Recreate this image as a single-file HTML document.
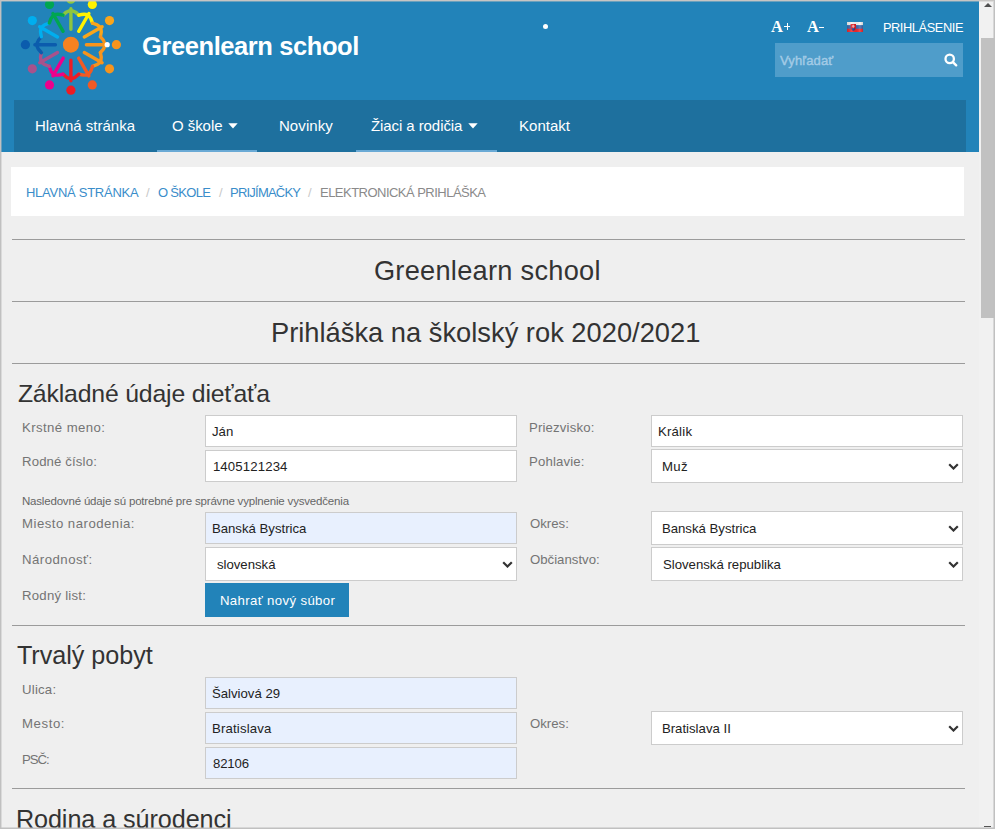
<!DOCTYPE html>
<html><head><meta charset="utf-8">
<style>
*{margin:0;padding:0;box-sizing:border-box}
html,body{width:995px;height:829px;overflow:hidden;background:#efefef}
body{position:relative;font-family:'Liberation Sans',sans-serif}
.b{position:absolute}
.t{position:absolute;white-space:nowrap;line-height:1}
.bm{display:inline-block;width:0;height:0;vertical-align:baseline}
</style></head><body>
<div class="b" style="left:0px;top:0px;width:995px;height:829px;background:#efefef;"></div>
<div class="b" style="left:1px;top:1px;width:978px;height:151px;background:#2283b9;"></div>
<svg width="140" height="100" style="position:absolute;left:0;top:0"><g fill="none" stroke-width="3.4" stroke-linecap="round" stroke-linejoin="round"><path stroke="#8dc63f" d="M70.9 29.2L70.9 8.7M63.0 15.2Q66.2 11.5 70.9 10.2Q75.6 11.5 78.8 15.2"/><circle cx="70.9" cy="-0.8" r="4.6" fill="#8dc63f" stroke="none"/><path stroke="#fff200" d="M78.7 31.3L88.9 13.5M78.8 15.2Q83.4 13.6 88.2 14.8Q91.5 18.3 92.5 23.1"/><circle cx="92.3" cy="4.5" r="4.6" fill="#fff200" stroke="none"/><path stroke="#f9a51b" d="M84.3 37.0L102.1 26.7M92.5 23.1Q97.3 24.1 100.8 27.5Q102.0 32.2 100.4 36.8"/><circle cx="109.5" cy="20.6" r="4.6" fill="#f9a51b" stroke="none"/><path stroke="#f7941d" d="M86.4 44.7L106.9 44.7M100.4 36.8Q104.1 40.0 105.4 44.7Q104.1 49.4 100.4 52.6"/><circle cx="116.4" cy="44.7" r="4.6" fill="#f7941d" stroke="none"/><path stroke="#f7941d" d="M84.3 52.5L102.1 62.7M100.4 52.6Q102.0 57.2 100.8 62.0Q97.3 65.3 92.5 66.3"/><circle cx="109.5" cy="68.8" r="4.6" fill="#f7941d" stroke="none"/><path stroke="#f15a24" d="M78.7 58.1L88.9 75.9M92.5 66.3Q91.5 71.1 88.2 74.6Q83.4 75.8 78.8 74.2"/><circle cx="92.3" cy="84.9" r="4.6" fill="#f15a24" stroke="none"/><path stroke="#ed1c24" d="M70.9 60.2L70.9 80.7M78.8 74.2Q75.6 77.9 70.9 79.2Q66.2 77.9 63.0 74.2"/><circle cx="70.9" cy="90.2" r="4.6" fill="#ed1c24" stroke="none"/><path stroke="#ec008c" d="M63.2 58.1L52.9 75.9M63.0 74.2Q58.4 75.8 53.7 74.6Q50.3 71.1 49.3 66.3"/><circle cx="49.5" cy="84.9" r="4.6" fill="#ec008c" stroke="none"/><path stroke="#a8528c" d="M57.5 52.5L39.7 62.7M49.3 66.3Q44.5 65.3 41.0 62.0Q39.8 57.2 41.4 52.6"/><circle cx="32.3" cy="68.8" r="4.6" fill="#a8528c" stroke="none"/><path stroke="#0b5cad" d="M55.4 44.7L34.9 44.7M41.4 52.6Q37.7 49.4 36.4 44.7Q37.7 40.0 41.4 36.8"/><circle cx="25.4" cy="44.7" r="4.6" fill="#0b5cad" stroke="none"/><path stroke="#00aeef" d="M57.5 37.0L39.7 26.7M41.4 36.8Q39.8 32.2 41.0 27.4Q44.5 24.1 49.3 23.1"/><circle cx="32.3" cy="20.6" r="4.6" fill="#00aeef" stroke="none"/><path stroke="#00a651" d="M63.1 31.3L52.9 13.5M49.3 23.1Q50.3 18.3 53.6 14.8Q58.4 13.6 63.0 15.2"/><circle cx="49.5" cy="4.5" r="4.6" fill="#00a651" stroke="none"/></g><circle cx="70.9" cy="44.7" r="8" fill="#f58220"/><circle cx="107.2" cy="44.7" r="2.6" fill="#fff"/></svg>
<div class="b" style="left:542.9px;top:23.9px;width:5.2px;height:5.2px;background:#fff;border-radius:50%"></div>
<svg class="b" style="left:847px;top:22px" width="16" height="10" viewBox="0 0 16 10"><defs><linearGradient id="fg" x1="0" y1="0" x2="1" y2="0"><stop offset="0" stop-color="#000" stop-opacity=".12"/><stop offset=".3" stop-color="#fff" stop-opacity=".15"/><stop offset=".55" stop-color="#000" stop-opacity=".05"/><stop offset=".8" stop-color="#fff" stop-opacity=".15"/><stop offset="1" stop-color="#000" stop-opacity=".15"/></linearGradient></defs><rect width="16" height="3.3" fill="#f6f6f6"/><rect y="3.3" width="16" height="3.4" fill="#3e68b0"/><rect y="6.7" width="16" height="3.3" fill="#f0282c"/><path d="M3.6 1.9h5.4v3.9q0 2.4-2.7 3.4q-2.7-1-2.7-3.4z" fill="#e0191f"/><path d="M4.3 6.6q2-1.2 4 0q-0.5 1.9-2 2.3q-1.5-.4-2-2.3z" fill="#1d3f95"/><path d="M6.3 2.6v3.6M5.2 3.6h2.2M4.9 4.6h2.8" stroke="#f4c6c6" stroke-width=".7"/><rect width="16" height="10" fill="url(#fg)"/></svg>
<div class="b" style="left:775px;top:43px;width:188px;height:34px;background:#4f9dca;"></div>
<div class="b" style="left:783.8px;top:25.8px;width:6.6px;height:1.1px;background:#fff;"></div>
<div class="b" style="left:786.5px;top:22.8px;width:1.1px;height:7px;background:#fff;"></div>
<div class="b" style="left:819.4px;top:26.9px;width:4.2px;height:1.0px;background:#fff;"></div>
<svg class="b" style="left:944px;top:53px" width="14" height="14" viewBox="0 0 14 14"><circle cx="5.7" cy="5.9" r="4.2" stroke="#fff" stroke-width="2.3" fill="none"/><path d="M8.9 9.1L12.2 12.3" stroke="#fff" stroke-width="2.4" stroke-linecap="round"/></svg>
<div class="b" style="left:14px;top:100px;width:952px;height:52px;background:#1e709e;"></div>
<div class="b" style="left:157px;top:150px;width:100px;height:2px;background:#6aaad5;"></div>
<div class="b" style="left:356px;top:150px;width:141px;height:2px;background:#6aaad5;"></div>
<svg class="b" style="left:228px;top:123px" width="10" height="6" viewBox="0 0 10 6"><path d="M0.3 0.3H9.7L5 5.6Z" fill="#fff"/></svg>
<svg class="b" style="left:468.4px;top:123px" width="10" height="6" viewBox="0 0 10 6"><path d="M0.3 0.3H9.7L5 5.6Z" fill="#fff"/></svg>
<div class="b" style="left:11px;top:167px;width:953px;height:49px;background:#fff;"></div>
<div class="b" style="left:12px;top:239px;width:953px;height:1px;background:#9b9b9b;"></div>
<div class="b" style="left:12px;top:301px;width:953px;height:1px;background:#9b9b9b;"></div>
<div class="b" style="left:12px;top:363px;width:953px;height:1px;background:#9b9b9b;"></div>
<div class="b" style="left:12px;top:625px;width:953px;height:1px;background:#9b9b9b;"></div>
<div class="b" style="left:12px;top:788px;width:953px;height:1px;background:#9b9b9b;"></div>
<div class="b" style="left:205px;top:415px;width:312px;height:32px;background:#fff;border:1px solid #cccccc"></div>
<div class="b" style="left:651px;top:415px;width:312px;height:32px;background:#fff;border:1px solid #cccccc"></div>
<div class="b" style="left:205px;top:450px;width:312px;height:32px;background:#fff;border:1px solid #cccccc"></div>
<div class="b" style="left:651px;top:449px;width:312px;height:34px;background:#fff;border:1px solid #cccccc"></div><svg class="b" style="left:948px;top:463px" width="11" height="7" viewBox="0 0 11 7"><path d="M1.2 1.2L5.5 5.5L9.8 1.2" stroke="#333" stroke-width="2.2" fill="none"/></svg>
<div class="b" style="left:205px;top:512px;width:312px;height:32px;background:#e8f0fe;border:1px solid #cccccc"></div>
<div class="b" style="left:651px;top:511px;width:312px;height:34px;background:#fff;border:1px solid #cccccc"></div><svg class="b" style="left:948px;top:525px" width="11" height="7" viewBox="0 0 11 7"><path d="M1.2 1.2L5.5 5.5L9.8 1.2" stroke="#333" stroke-width="2.2" fill="none"/></svg>
<div class="b" style="left:205px;top:547px;width:312px;height:34px;background:#fff;border:1px solid #cccccc"></div><svg class="b" style="left:502px;top:561px" width="11" height="7" viewBox="0 0 11 7"><path d="M1.2 1.2L5.5 5.5L9.8 1.2" stroke="#333" stroke-width="2.2" fill="none"/></svg>
<div class="b" style="left:651px;top:547px;width:312px;height:34px;background:#fff;border:1px solid #cccccc"></div><svg class="b" style="left:948px;top:561px" width="11" height="7" viewBox="0 0 11 7"><path d="M1.2 1.2L5.5 5.5L9.8 1.2" stroke="#333" stroke-width="2.2" fill="none"/></svg>
<div class="b" style="left:205px;top:583px;width:144px;height:34px;background:#2283b9;"></div>
<div class="b" style="left:205px;top:677px;width:312px;height:32px;background:#e8f0fe;border:1px solid #cccccc"></div>
<div class="b" style="left:205px;top:712px;width:312px;height:32px;background:#e8f0fe;border:1px solid #cccccc"></div>
<div class="b" style="left:651px;top:711px;width:312px;height:34px;background:#fff;border:1px solid #cccccc"></div><svg class="b" style="left:948px;top:725px" width="11" height="7" viewBox="0 0 11 7"><path d="M1.2 1.2L5.5 5.5L9.8 1.2" stroke="#333" stroke-width="2.2" fill="none"/></svg>
<div class="b" style="left:205px;top:747px;width:312px;height:32px;background:#e8f0fe;border:1px solid #cccccc"></div>
<div class="b" style="left:979px;top:1px;width:14px;height:826px;background:#f1f1f1;"></div>
<div class="b" style="left:981px;top:38px;width:13px;height:280px;background:#c1c1c1;"></div>
<svg class="b" style="left:982.5px;top:2px" width="10" height="6" viewBox="0 0 10 6"><path d="M1 5H9L5 1Z" fill="#505050"/></svg>
<div class="b" style="left:984px;top:826px;width:7px;height:1px;background:#555;"></div>
<div id="title" class="t" style="left:142.00px;top:34.00px;font-family:'Liberation Sans',sans-serif;font-weight:bold;font-size:25.5px;color:#fff;letter-spacing:-0.411px;">Greenlearn school<i class="bm"></i></div>
<div id="aplus" class="t" style="left:770.92px;top:19.00px;font-family:'Liberation Serif',serif;font-weight:bold;font-size:16.5px;color:#fff;letter-spacing:0.000px;">A<i class="bm"></i></div>
<div id="aminus" class="t" style="left:806.92px;top:19.00px;font-family:'Liberation Serif',serif;font-weight:bold;font-size:16.5px;color:#fff;letter-spacing:0.000px;">A<i class="bm"></i></div>
<div id="prih" class="t" style="left:882.92px;top:21.60px;font-family:'Liberation Sans',sans-serif;font-weight:normal;font-size:12.8px;color:#fff;letter-spacing:-0.410px;">PRIHLÁSENIE<i class="bm"></i></div>
<div id="vyh" class="t" style="left:779.95px;top:54.00px;font-family:'Liberation Sans',sans-serif;font-weight:normal;font-size:13px;color:#a3cbe6;letter-spacing:0.143px;-webkit-text-stroke:0.4px #a3cbe6">Vyhľadať<i class="bm"></i></div>
<div id="nav0" class="t" style="left:35.00px;top:117.70px;font-family:'Liberation Sans',sans-serif;font-weight:normal;font-size:15px;color:#fff;letter-spacing:-0.000px;">Hlavná stránka<i class="bm"></i></div>
<div id="nav1" class="t" style="left:171.92px;top:117.70px;font-family:'Liberation Sans',sans-serif;font-weight:normal;font-size:15px;color:#fff;letter-spacing:-0.033px;">O škole<i class="bm"></i></div>
<div id="nav2" class="t" style="left:278.96px;top:117.70px;font-family:'Liberation Sans',sans-serif;font-weight:normal;font-size:15px;color:#fff;letter-spacing:0.084px;">Novinky<i class="bm"></i></div>
<div id="nav3" class="t" style="left:370.92px;top:117.70px;font-family:'Liberation Sans',sans-serif;font-weight:normal;font-size:15px;color:#fff;letter-spacing:-0.072px;">Žiaci a rodičia<i class="bm"></i></div>
<div id="nav4" class="t" style="left:519.00px;top:117.70px;font-family:'Liberation Sans',sans-serif;font-weight:normal;font-size:15px;color:#fff;letter-spacing:0.016px;">Kontakt<i class="bm"></i></div>
<div id="bc0" class="t" style="left:26.00px;top:186.00px;font-family:'Liberation Sans',sans-serif;font-weight:normal;font-size:13px;color:#3a8dca;letter-spacing:-0.269px;">HLAVNÁ STRÁNKA<i class="bm"></i></div>
<div id="bc1" class="t" style="left:145.89px;top:186.00px;font-family:'Liberation Sans',sans-serif;font-weight:normal;font-size:13px;color:#c8c8c8;letter-spacing:0.000px;">/<i class="bm"></i></div>
<div id="bc2" class="t" style="left:157.89px;top:186.00px;font-family:'Liberation Sans',sans-serif;font-weight:normal;font-size:13px;color:#3a8dca;letter-spacing:-0.683px;">O ŠKOLE<i class="bm"></i></div>
<div id="bc3" class="t" style="left:218.92px;top:186.00px;font-family:'Liberation Sans',sans-serif;font-weight:normal;font-size:13px;color:#c8c8c8;letter-spacing:0.000px;">/<i class="bm"></i></div>
<div id="bc4" class="t" style="left:230.00px;top:186.00px;font-family:'Liberation Sans',sans-serif;font-weight:normal;font-size:13px;color:#3a8dca;letter-spacing:-0.777px;">PRIJÍMAČKY<i class="bm"></i></div>
<div id="bc5" class="t" style="left:307.92px;top:186.00px;font-family:'Liberation Sans',sans-serif;font-weight:normal;font-size:13px;color:#c8c8c8;letter-spacing:0.000px;">/<i class="bm"></i></div>
<div id="bc6" class="t" style="left:320.00px;top:186.00px;font-family:'Liberation Sans',sans-serif;font-weight:normal;font-size:13px;color:#8a8a8a;letter-spacing:-0.524px;">ELEKTRONICKÁ PRIHLÁŠKA<i class="bm"></i></div>
<div id="h1" class="t" style="left:373.89px;top:256.60px;font-family:'Liberation Sans',sans-serif;font-weight:normal;font-size:27.2px;color:#333;letter-spacing:0.281px;">Greenlearn school<i class="bm"></i></div>
<div id="h2" class="t" style="left:271.00px;top:318.70px;font-family:'Liberation Sans',sans-serif;font-weight:normal;font-size:27.3px;color:#333;letter-spacing:0.000px;">Prihláška na školský rok 2020/2021<i class="bm"></i></div>
<div id="h3" class="t" style="left:17.89px;top:381.70px;font-family:'Liberation Sans',sans-serif;font-weight:normal;font-size:24.8px;color:#333;letter-spacing:-0.170px;">Základné údaje dieťaťa<i class="bm"></i></div>
<div id="h4" class="t" style="left:16.89px;top:643.40px;font-family:'Liberation Sans',sans-serif;font-weight:normal;font-size:25.2px;color:#333;letter-spacing:-0.040px;">Trvalý pobyt<i class="bm"></i></div>
<div id="h5" class="t" style="left:15.89px;top:806.60px;font-family:'Liberation Sans',sans-serif;font-weight:normal;font-size:25.2px;color:#333;letter-spacing:-0.074px;">Rodina a súrodenci<i class="bm"></i></div>
<div id="l0" class="t" style="left:22.00px;top:420.90px;font-family:'Liberation Sans',sans-serif;font-weight:normal;font-size:13.2px;color:#747474;letter-spacing:0.415px;">Krstné meno:<i class="bm"></i></div>
<div id="l1" class="t" style="left:22.00px;top:454.70px;font-family:'Liberation Sans',sans-serif;font-weight:normal;font-size:13.2px;color:#747474;letter-spacing:0.136px;">Rodné číslo:<i class="bm"></i></div>
<div id="l2" class="t" style="left:22.00px;top:517.10px;font-family:'Liberation Sans',sans-serif;font-weight:normal;font-size:13.2px;color:#747474;letter-spacing:0.481px;">Miesto narodenia:<i class="bm"></i></div>
<div id="l3" class="t" style="left:22.00px;top:553.00px;font-family:'Liberation Sans',sans-serif;font-weight:normal;font-size:13.2px;color:#747474;letter-spacing:0.480px;">Národnosť:<i class="bm"></i></div>
<div id="l4" class="t" style="left:22.00px;top:588.90px;font-family:'Liberation Sans',sans-serif;font-weight:normal;font-size:13.2px;color:#747474;letter-spacing:0.230px;">Rodný list:<i class="bm"></i></div>
<div id="l5" class="t" style="left:22.00px;top:682.90px;font-family:'Liberation Sans',sans-serif;font-weight:normal;font-size:13.2px;color:#747474;letter-spacing:0.220px;">Ulica:<i class="bm"></i></div>
<div id="l6" class="t" style="left:22.00px;top:717.10px;font-family:'Liberation Sans',sans-serif;font-weight:normal;font-size:13.2px;color:#747474;letter-spacing:0.580px;">Mesto:<i class="bm"></i></div>
<div id="l7" class="t" style="left:22.00px;top:753.30px;font-family:'Liberation Sans',sans-serif;font-weight:normal;font-size:13.2px;color:#747474;letter-spacing:-1.000px;">PSČ:<i class="bm"></i></div>
<div id="r0" class="t" style="left:529.00px;top:420.90px;font-family:'Liberation Sans',sans-serif;font-weight:normal;font-size:13.2px;color:#747474;letter-spacing:0.160px;">Priezvisko:<i class="bm"></i></div>
<div id="r1" class="t" style="left:529.00px;top:454.80px;font-family:'Liberation Sans',sans-serif;font-weight:normal;font-size:13.2px;color:#747474;letter-spacing:0.150px;">Pohlavie:<i class="bm"></i></div>
<div id="r2" class="t" style="left:530.00px;top:517.10px;font-family:'Liberation Sans',sans-serif;font-weight:normal;font-size:13.2px;color:#747474;letter-spacing:0.000px;">Okres:<i class="bm"></i></div>
<div id="r3" class="t" style="left:530.00px;top:553.00px;font-family:'Liberation Sans',sans-serif;font-weight:normal;font-size:13.2px;color:#747474;letter-spacing:0.000px;">Občianstvo:<i class="bm"></i></div>
<div id="r4" class="t" style="left:530.00px;top:717.10px;font-family:'Liberation Sans',sans-serif;font-weight:normal;font-size:13.2px;color:#747474;letter-spacing:0.000px;">Okres:<i class="bm"></i></div>
<div id="note" class="t" style="left:21.96px;top:496.40px;font-family:'Liberation Sans',sans-serif;font-weight:normal;font-size:11.5px;color:#666;letter-spacing:-0.182px;">Nasledovné údaje sú potrebné pre správne vyplnenie vysvedčenia<i class="bm"></i></div>
<div id="v0" class="t" style="left:212.00px;top:425.00px;font-family:'Liberation Sans',sans-serif;font-weight:normal;font-size:13.2px;color:#222;letter-spacing:0.000px;">Ján<i class="bm"></i></div>
<div id="v1" class="t" style="left:212.89px;top:459.90px;font-family:'Liberation Sans',sans-serif;font-weight:normal;font-size:13.2px;color:#222;letter-spacing:0.135px;">1405121234<i class="bm"></i></div>
<div id="v2" class="t" style="left:657.92px;top:425.40px;font-family:'Liberation Sans',sans-serif;font-weight:normal;font-size:13.2px;color:#222;letter-spacing:0.220px;">Králik<i class="bm"></i></div>
<div id="v3" class="t" style="left:661.92px;top:460.00px;font-family:'Liberation Sans',sans-serif;font-weight:normal;font-size:13.2px;color:#222;letter-spacing:0.400px;">Muž<i class="bm"></i></div>
<div id="v4" class="t" style="left:211.92px;top:521.80px;font-family:'Liberation Sans',sans-serif;font-weight:normal;font-size:13.2px;color:#222;letter-spacing:0.000px;">Banská Bystrica<i class="bm"></i></div>
<div id="v5" class="t" style="left:661.92px;top:521.80px;font-family:'Liberation Sans',sans-serif;font-weight:normal;font-size:13.2px;color:#222;letter-spacing:0.000px;">Banská Bystrica<i class="bm"></i></div>
<div id="v6" class="t" style="left:216.92px;top:557.70px;font-family:'Liberation Sans',sans-serif;font-weight:normal;font-size:13.2px;color:#222;letter-spacing:0.000px;">slovenská<i class="bm"></i></div>
<div id="v7" class="t" style="left:662.92px;top:557.70px;font-family:'Liberation Sans',sans-serif;font-weight:normal;font-size:13.2px;color:#222;letter-spacing:0.000px;">Slovenská republika<i class="bm"></i></div>
<div id="v8" class="t" style="left:211.89px;top:687.20px;font-family:'Liberation Sans',sans-serif;font-weight:normal;font-size:13.2px;color:#222;letter-spacing:0.000px;">Šalviová 29<i class="bm"></i></div>
<div id="v9" class="t" style="left:212.00px;top:722.10px;font-family:'Liberation Sans',sans-serif;font-weight:normal;font-size:13.2px;color:#222;letter-spacing:0.158px;">Bratislava<i class="bm"></i></div>
<div id="v10" class="t" style="left:213.00px;top:756.80px;font-family:'Liberation Sans',sans-serif;font-weight:normal;font-size:13.2px;color:#222;letter-spacing:-0.175px;">82106<i class="bm"></i></div>
<div id="v11" class="t" style="left:661.92px;top:722.10px;font-family:'Liberation Sans',sans-serif;font-weight:normal;font-size:13.2px;color:#222;letter-spacing:0.000px;">Bratislava II<i class="bm"></i></div>
<div id="btn" class="t" style="left:219.96px;top:593.90px;font-family:'Liberation Sans',sans-serif;font-weight:normal;font-size:13.2px;color:#fff;letter-spacing:0.368px;">Nahrať nový súbor<i class="bm"></i></div>
<div class="b" style="left:0px;top:0px;width:995px;height:1px;background:#c7c5c3;"></div><div class="b" style="left:1px;top:1px;width:992px;height:1px;background:rgba(199,197,195,0.45);"></div><div class="b" style="left:0px;top:0px;width:1px;height:829px;background:#c0c0c0;"></div><div class="b" style="left:1px;top:1px;width:1px;height:827px;background:rgba(192,192,192,0.45);"></div>
<div class="b" style="left:994px;top:0px;width:1px;height:829px;background:#c0c0c0;"></div><div class="b" style="left:993px;top:1px;width:1px;height:827px;background:rgba(192,192,192,0.5);"></div>
<div class="b" style="left:0px;top:828px;width:995px;height:1px;background:#c0c0c0;"></div><div class="b" style="left:1px;top:827px;width:993px;height:1px;background:rgba(192,192,192,0.5);"></div>

</body></html>
